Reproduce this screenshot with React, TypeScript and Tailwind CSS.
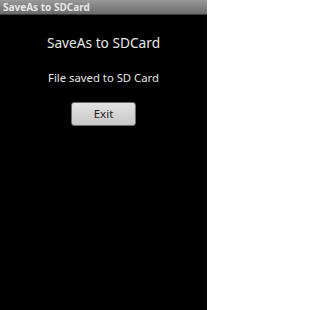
export default function App() {
  return (
    <div className="w-[207px] h-[310px] bg-black flex flex-col" style={{ fontFamily: '"Noto Sans", "Open Sans", sans-serif' }}>
      <div className="h-[15px] bg-gradient-to-b from-[#999999] to-[#6b6b6b] flex items-center pl-[3px] border-b border-[#3a3a3a]">
        <span className="text-[10px] font-bold text-[#e8e8e8] leading-none">SaveAs to SDCard</span>
      </div>
      <div className="flex flex-col items-center">
        <div className="mt-[18px] text-[13.7px] leading-[20px] text-[#e6e6e6]">SaveAs to SDCard</div>
        <div className="mt-[17px] text-[11.3px] leading-[16px] text-[#e6e6e6]">File saved to SD Card</div>
        <button className="mt-[16px] w-[65px] h-[24px] rounded-[3px] border border-[#6a6a6a] bg-gradient-to-b from-[#e2e2e2] to-[#c8c8c8] text-[11.5px] text-[#222222] flex items-center justify-center">
          Exit
        </button>
      </div>
    </div>
  );
}
